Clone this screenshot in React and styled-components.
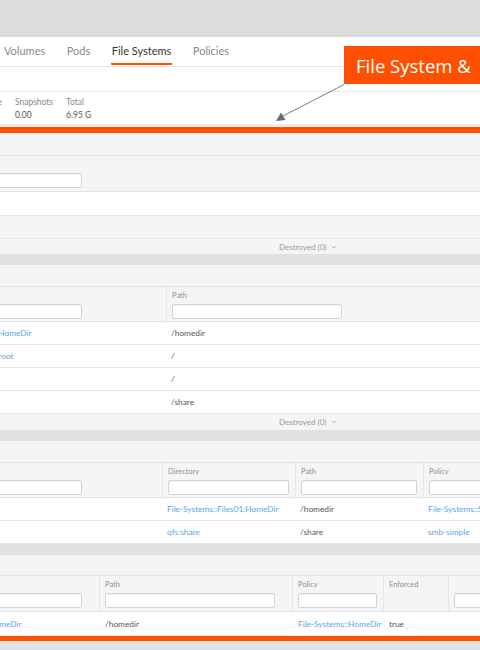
import React from 'react';
import styled, { createGlobalStyle } from 'styled-components';
import { ChevronDown } from 'lucide-react';

const Global = createGlobalStyle`
  html, body { margin: 0; padding: 0; background: #e2e2e2; }
  body { font-family: Lato, "Open Sans", "Liberation Sans", sans-serif; }
  * { box-sizing: border-box; }
`;

const Page = styled.div`
  position: relative;
  width: 480px;
  height: 650px;
  overflow: hidden;
  background: #e2e2e2;
`;

const TopBand = styled.div`
  height: 37px;
  background: #dcdcdc;
`;

const TabBar = styled.nav`
  height: 30px;
  background: #fff;
  border-bottom: 1px solid #e4e4e4;
  display: flex;
  gap: 19.5px;
  padding-left: 3px;
`;

const Tab = styled.div`
  height: 28px;
  padding: 1px 1px 0;
  display: flex;
  align-items: center;
  font-size: 11px;
  color: ${p => (p.$active ? '#333' : '#8a8a8a')};
  border-bottom: 2px solid ${p => (p.$active ? '#fe5000' : 'transparent')};
  border-radius: 0 0 1px 1px;
`;

const ToolRow = styled.div`
  height: 25px;
  background: #fff;
  border-bottom: 1px solid #ebebeb;
`;

const Stats = styled.div`
  height: 35px;
  background: #fff;
  border-bottom: 3px solid #ebebeb;
  display: flex;
  gap: 13px;
  padding-top: 5px;
  margin-left: -25px;
`;

const Stat = styled.div`
  display: flex;
  flex-direction: column;
  gap: 3px;
  font-size: 8.5px;
`;

const StatLabel = styled.span`
  color: #8a8a8a;
`;

const StatValue = styled.span`
  color: #555;
`;

const Frame = styled.div`
  border-top: 6px solid #fe5000;
  border-bottom: 5px solid #fe5000;
  background: #e2e2e2;
  display: flex;
  flex-direction: column;
  gap: 11px;
`;

const Section = styled.section`
  display: flex;
  flex-direction: column;
`;

const SectionHeader = styled.div`
  height: ${p => p.$h || 22}px;
  background: #f5f5f5;
  border-bottom: 1px solid #e3e3e3;
`;

const Table = styled.div`
  width: calc(100% + 193px);
  margin-left: -93px;
`;

const FilterRow = styled.div`
  height: ${p => p.$h || 35}px;
  background: #f5f5f5;
  border-bottom: 1px solid #e3e3e3;
  display: grid;
  grid-template-columns: ${p => p.$cols};
`;

const FilterCell = styled.div`
  display: flex;
  flex-direction: column;
  justify-content: flex-end;
  padding: 4px 6px 3px 5px;
  gap: 3px;
  border-left: ${p => (p.$first ? 'none' : '1px solid #e6e6e6')};
`;

const Label = styled.span`
  font-size: 7.5px;
  line-height: 10px;
  color: #8f8f8f;
  flex: 1;
`;

const Input = styled.div`
  height: 15px;
  max-width: 170px;
  background: #fff;
  border: 1px solid #d3d3d3;
  border-radius: 2px;
  box-shadow: inset 0 1px 1px rgba(0, 0, 0, 0.05);
`;

const Row = styled.div`
  height: ${p => p.$h || 23}px;
  background: ${p => (p.$muted ? '#f5f5f5' : '#fff')};
  border-bottom: 1px solid #e8e8e8;
  display: grid;
  grid-template-columns: ${p => p.$cols};
  align-items: center;
`;

const Cell = styled.div`
  padding-left: ${p => p.$pad ?? 5}px;
  font-size: 8.3px;
  white-space: nowrap;
  overflow: hidden;
  color: ${p => (p.$link ? '#5aa6e8' : '#555')};
`;

const Footer = styled.div`
  height: ${p => p.$h || 16}px;
  background: #f5f5f5;
  display: flex;
  align-items: center;
  gap: 4px;
  padding-left: 279px;
  font-size: 8px;
  color: #999;
`;

const Callout = styled.div`
  position: absolute;
  left: 344px;
  top: 46px;
  width: 160px;
  height: 38px;
  background: #fe5000;
  color: #fff;
  font-family: "Open Sans", "Liberation Sans", sans-serif;
  font-size: 18.5px;
  display: flex;
  align-items: center;
  padding-left: 12px;
  white-space: nowrap;
`;

const ArrowLayer = styled.svg`
  position: absolute;
  left: 0;
  top: 0;
  pointer-events: none;
`;

const Filters = ({ cols, h, items }) => (
  <FilterRow $cols={cols} $h={h}>
    {items.map((it, i) => (
      <FilterCell key={i} $first={i === 0}>
        <Label>{it.label}</Label>
        {it.input !== false && <Input />}
      </FilterCell>
    ))}
  </FilterRow>
);

const DataRow = ({ cols, cells, h, muted }) => (
  <Row $cols={cols} $h={h} $muted={muted}>
    {cells.map((c, i) => (
      <Cell key={i} $link={c.link} $pad={c.pad}>
        {c.text}
      </Cell>
    ))}
  </Row>
);

const Destroyed = ({ h }) => (
  <Footer $h={h}>
    Destroyed (0) <ChevronDown size={8} strokeWidth={2} color="#999" />
  </Footer>
);

const C1 = '1fr';
const C2 = '259px 1fr';
const C3 = '255px 133px 128px 1fr';
const C4 = '192px 193px 91px 65px 1fr';

export default function App() {
  return (
    <Page>
      <Global />
      <TopBand />
      <TabBar>
        <Tab>Volumes</Tab>
        <Tab>Pods</Tab>
        <Tab $active>File Systems</Tab>
        <Tab>Policies</Tab>
      </TabBar>
      <ToolRow />
      <Stats>
        <Stat>
          <StatLabel>Unique</StatLabel>
          <StatValue>0.00</StatValue>
        </Stat>
        <Stat>
          <StatLabel>Snapshots</StatLabel>
          <StatValue>0.00</StatValue>
        </Stat>
        <Stat>
          <StatLabel>Total</StatLabel>
          <StatValue>6.95 G</StatValue>
        </Stat>
      </Stats>

      <Frame>
        <Section>
          <SectionHeader $h={23} />
          <Table>
            <Filters cols={C1} h={36} items={[{ label: 'Name' }]} />
            <DataRow cols={C1} h={24} cells={[{ text: 'Files01', link: true }]} />
            <DataRow cols={C1} muted cells={[{ text: '' }]} />
          </Table>
          <Destroyed h={15} />
        </Section>

        <Section>
          <SectionHeader />
          <Table>
            <Filters cols={C2} items={[{ label: 'Name' }, { label: 'Path' }]} />
            <DataRow cols={C2} cells={[{ text: 'File-Systems::Files01:HomeDir', link: true, pad: 13 }, { text: '/homedir' }]} />
            <DataRow cols={C2} cells={[{ text: 'File-Systems::Files01:root', link: true, pad: 13 }, { text: '/' }]} />
            <DataRow cols={C2} cells={[{ text: 'qfs:root', link: true, pad: 13 }, { text: '/' }]} />
            <DataRow cols={C2} cells={[{ text: 'qfs:share', link: true, pad: 13 }, { text: '/share' }]} />
          </Table>
          <Destroyed />
        </Section>

        <Section>
          <SectionHeader />
          <Table>
            <Filters cols={C3} items={[{ label: 'Name' }, { label: 'Directory' }, { label: 'Path' }, { label: 'Policy' }]} />
            <DataRow
              cols={C3}
              cells={[
                { text: 'homedir' },
                { text: 'File-Systems::Files01:HomeDir', link: true },
                { text: '/homedir' },
                { text: 'File-Systems::SMB-Policy', link: true },
              ]}
            />
            <DataRow
              cols={C3}
              cells={[
                { text: 'share' },
                { text: 'qfs:share', link: true },
                { text: '/share' },
                { text: 'smb-simple', link: true },
              ]}
            />
          </Table>
        </Section>

        <Section>
          <SectionHeader $h={21} />
          <Table>
            <Filters
              cols={C4}
              h={36}
              items={[{ label: 'Directory' }, { label: 'Path' }, { label: 'Policy' }, { label: 'Enforced', input: false }, { label: '' }]}
            />
            <DataRow
              cols={C4}
              h={24}
              cells={[
                { text: 'File-Systems::Files01:HomeDir', link: true, pad: 3 },
                { text: '/homedir', pad: 6 },
                { text: 'File-Systems::HomeDir', link: true, pad: 6 },
                { text: 'true', pad: 6 },
                { text: '' },
              ]}
            />
          </Table>
        </Section>
      </Frame>

      <Callout>File System &amp;</Callout>
      <ArrowLayer width="480" height="650" viewBox="0 0 480 650">
        <line x1="344" y1="84.5" x2="282" y2="116.5" stroke="#7b7b88" strokeWidth="1" />
        <polygon points="276,121 285.5,120 281,112.5" fill="#6a6a78" />
      </ArrowLayer>
    </Page>
  );
}
